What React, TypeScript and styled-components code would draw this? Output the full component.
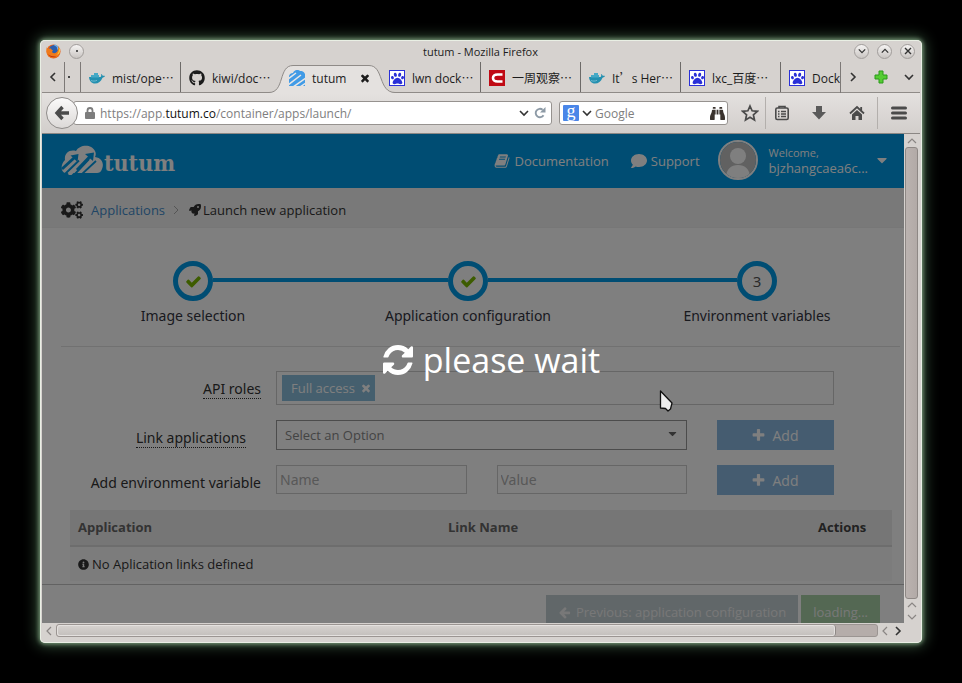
import React from "react";
import styled, { createGlobalStyle } from "styled-components";
import {
  FaBinoculars, FaCaretDown, FaCogs, FaComment, FaGithub, FaInfoCircle, FaPaw, FaRocket,
} from "react-icons/fa";

const Global = createGlobalStyle`
  * { box-sizing: border-box; }
  body { margin: 0; background: #000; }
  button, input, select { font: inherit; color: inherit; margin: 0; }
  button { border: 0; background: none; padding: 0; cursor: pointer; }
  svg { display: block; flex: none; }
`;

/* ---------- desktop and window frame ---------- */

const Desktop = styled.div`
  height: 100vh;
  min-height: 480px;
  padding: 40px;
  background: #000;
  display: flex;
`;

const Frame = styled.div`
  flex: 1;
  min-width: 0;
  display: flex;
  flex-direction: column;
  padding: 0 2px 2px;
  border-radius: 5px;
  background: #d6d2cf;
  box-shadow: inset 0 0 0 1px #e9efe4, 0 0 4px 1px #7c9c7c, 0 0 14px 3px #35503a;
  font-family: "Open Sans", "Noto Sans CJK SC", sans-serif;
  color: #1c1c1c;
`;

const TitleBar = styled.header`
  height: 22px;
  flex: none;
  padding: 0 5px 0 4px;
  display: grid;
  grid-template-columns: 1fr auto 1fr;
  align-items: center;
  font-size: 11px;
`;

const TitleGroup = styled.div<{ $end?: boolean }>`
  display: flex;
  align-items: center;
  gap: 8px;
  justify-content: ${(p) => (p.$end ? "flex-end" : "flex-start")};
`;

const RoundButton = styled.button`
  width: 15px;
  height: 15px;
  border-radius: 50%;
  border: 1px solid #a19d9b;
  background: linear-gradient(#f6f4f3, #c9c5c2);
  display: flex;
  align-items: center;
  justify-content: center;
`;

/* ---------- tab strip ---------- */

const TabStrip = styled.div`
  height: 31px;
  flex: none;
  display: flex;
  border-bottom: 1px solid #8f8b88;
  font-size: 12px;
`;

const StripButton = styled.button<{ $width: number; $line?: boolean }>`
  width: ${(p) => p.$width}px;
  flex: none;
  display: flex;
  align-items: center;
  justify-content: center;
  border-right: ${(p) => (p.$line ? "1px solid #7d7977" : "0")};
`;

const TabList = styled.div`
  flex: 1;
  min-width: 0;
  display: flex;
  margin-bottom: -1px;
  padding-bottom: 1px;
  overflow: hidden;
  border-right: 1px solid #7d7977;
`;

const TabItem = styled.div<{ $active?: boolean; $line?: boolean }>`
  position: relative;
  flex: 0 0 100px;
  display: flex;
  align-items: center;
  padding-left: 8px;
  border-right: 1px solid ${(p) => (p.$line ? "#6d6a68" : "transparent")};
  z-index: ${(p) => (p.$active ? 1 : 0)};
`;

const TabButton = styled.button`
  position: relative;
  display: flex;
  align-items: center;
  gap: 7px;
  padding-top: 2px;
  white-space: nowrap;
`;

const Wide = styled.span`
  font-family: "Noto Sans CJK SC", sans-serif;
  line-height: 1;
`;

const TabClose = styled.button`
  position: relative;
  margin: 2px 9px 0 auto;
`;

const TabShape = styled.svg`
  position: absolute;
  left: -12px;
  top: 3px;
`;

const Favicon = styled.span<{ $border?: string; $bg?: string; $fg?: string }>`
  width: 16px;
  height: 16px;
  flex: none;
  display: flex;
  align-items: center;
  justify-content: center;
  border: ${(p) => (p.$border ? `1px solid ${p.$border}` : "0")};
  background: ${(p) => p.$bg ?? "transparent"};
  color: ${(p) => p.$fg ?? "inherit"};
`;

/* ---------- navigation toolbar ---------- */

const NavBar = styled.nav`
  height: 41px;
  flex: none;
  display: flex;
  align-items: center;
  padding: 0 4px;
  background: linear-gradient(#e4e1df, #d2cecb);
  border-bottom: 1px solid #8b8784;
  font-size: 12px;
`;

const BackButton = styled.button`
  position: relative;
  width: 32px;
  height: 32px;
  flex: none;
  border-radius: 50%;
  border: 1px solid #8f8c8a;
  background: linear-gradient(#fbfafa, #dcd9d7);
  display: flex;
  align-items: center;
  justify-content: center;
`;

const Field = styled.div<{ $fixed?: boolean }>`
  flex: ${(p) => (p.$fixed ? "0 0 169px" : "1")};
  min-width: 0;
  height: 24px;
  display: flex;
  align-items: center;
  gap: ${(p) => (p.$fixed ? "3px" : "5px")};
  margin-left: ${(p) => (p.$fixed ? "7px" : "-5px")};
  padding: ${(p) => (p.$fixed ? "0 2px 0 3px" : "0 5px 0 11px")};
  background: #fff;
  border: 1px solid #96928f;
  border-radius: 3px;
  color: #7e7e7e;
`;

const Address = styled.div`
  flex: 1;
  min-width: 0;
  white-space: nowrap;
  overflow: hidden;
  strong { font-weight: 400; color: #111; }
`;

const SearchInput = styled.input`
  flex: 1;
  min-width: 0;
  border: 0;
  outline: 0;
  padding: 0;
  background: none;
  &::placeholder { color: #7e7e7e; opacity: 1; }
`;

const GoogleMark = styled.span`
  width: 16px;
  height: 16px;
  border-radius: 1px;
  background: #4a86e8;
  color: #fff;
  font: 18px/12px "Liberation Serif", serif;
  text-align: center;
`;

const Tool = styled.button<{ $width: number; $line?: boolean; $before?: number; $after?: number }>`
  width: ${(p) => p.$width}px;
  height: 32px;
  flex: none;
  display: flex;
  align-items: center;
  justify-content: center;
  padding: 0 ${(p) => p.$after ?? 0}px 0 ${(p) => p.$before ?? 0}px;
  border-right: ${(p) => (p.$line ? "1px solid #b3afac" : "0")};
`;

/* ---------- viewport and scroll bars ---------- */

const Body = styled.div`
  flex: 1;
  min-height: 0;
  display: flex;
`;

const Viewport = styled.main`
  position: relative;
  flex: 1;
  min-width: 0;
  overflow: hidden;
  background: #fff;
  font-family: "Open Sans", "Noto Sans", sans-serif;
  font-size: 13px;
  color: #333;
`;

const VBar = styled.div`
  width: 16px;
  flex: none;
  display: flex;
  flex-direction: column;
  align-items: center;
  padding-right: 1px;
`;

const VThumb = styled.div`
  flex: 1;
  width: 13px;
  border: 1px solid #8e8885;
  border-radius: 3px;
  background: linear-gradient(90deg, #bbb3b0, #b2aaa7);
`;

const HBar = styled.div`
  height: 18px;
  flex: none;
  display: flex;
  align-items: flex-start;
  padding: 1px 16px 0 0;
`;

const HTrack = styled.div`
  flex: 1;
  height: 13px;
  border: 1px solid #9b9592;
  border-radius: 3px;
  background: #b5adaa;
`;

const HThumb = styled.div`
  width: 95%;
  height: 11px;
  border-radius: 3px;
  border-right: 1px solid #8e8885;
  background: linear-gradient(#d6d2cf, #c3bfbc);
  box-shadow: inset 0 0 0 1px #e4e1df;
`;

const ScrollButton = styled.button<{ $w: number; $h: number }>`
  width: ${(p) => p.$w}px;
  height: ${(p) => p.$h}px;
  flex: none;
  display: flex;
  align-items: center;
  justify-content: center;
`;

/* ---------- web page ---------- */

const SiteHeader = styled.header`
  height: 54px;
  display: flex;
  align-items: center;
  padding: 0 14px 2px 19px;
  background: #009ae6;
  color: #fff;
`;

const Logo = styled.a`
  display: flex;
  align-items: center;
  margin-right: auto;
  color: #fff;
  text-decoration: none;
  font: 700 23px/30px "DejaVu Serif Condensed", "DejaVu Serif", serif;
  span { padding-top: 5px; }
`;

const HeaderLink = styled.a`
  display: flex;
  align-items: center;
  gap: 4px;
  margin-right: 22px;
  padding-top: 2px;
  color: #fff;
  text-decoration: none;
`;

const Account = styled.button`
  display: flex;
  align-items: center;
  gap: 11px;
  text-align: left;
  line-height: 16px;
  small { display: block; font-size: 11px; line-height: 15px; }
  > svg { margin-left: -5px; }
`;

const Avatar = styled.span`
  width: 40px;
  height: 40px;
  margin-left: -4px;
  border-radius: 50%;
  border: 2px solid #fff;
  overflow: hidden;
`;

const Crumbs = styled.nav`
  height: 40px;
  display: flex;
  align-items: center;
  gap: 8px;
  padding: 4px 19px 0;
  background: #f3f3f3;
  border-bottom: 1px solid #efefef;
  a { color: #428bca; text-decoration: none; margin-right: -2px; }
`;

const CrumbHere = styled.span`
  display: flex;
  align-items: center;
  gap: 2px;
`;

const Steps = styled.ol`
  margin: 0;
  padding: 33px 8px 0 26px;
  list-style: none;
  display: grid;
  grid-template-columns: 250fr 300fr 278fr;
  font-family: "Noto Sans", sans-serif;
  font-size: 14px;
  line-height: 20px;
  color: #33343e;
`;

const Step = styled.li`
  text-align: center;
`;

const StepTrack = styled.div`
  display: flex;
  align-items: center;
  margin-bottom: 5px;
`;

const StepLine = styled.span<{ $on?: boolean }>`
  flex: 1;
  height: 4px;
  margin-bottom: 2px;
  background: ${(p) => (p.$on ? "#009ae6" : "transparent")};
`;

const StepCircle = styled.span`
  width: 40px;
  height: 40px;
  border: 5px solid #009ae6;
  border-radius: 50%;
  display: flex;
  align-items: center;
  justify-content: center;
  font-size: 15px;
  color: #555;
`;

const Divider = styled.hr`
  margin: 20px 4px 0 19px;
  border: 0;
  border-top: 1px solid #e2e2e2;
`;

const Form = styled.form`
  padding: 24px 70px 0 0;
  display: grid;
  grid-template-columns: 219px minmax(0, 1fr) 117px;
  row-gap: 15px;
  column-gap: 15px;
  font-size: 14px;
`;

const LabelCell = styled.div<{ $inset?: boolean; $drop?: boolean }>`
  display: flex;
  justify-content: flex-end;
  align-items: center;
  padding-top: ${(p) => (p.$drop ? "6px" : "2px")};
  padding-right: ${(p) => (p.$inset ? "15px" : "0")};
`;

const Label = styled.label<{ $dotted?: boolean }>`
  font-family: "Noto Sans", sans-serif;
  line-height: 18px;
  border-bottom: ${(p) => (p.$dotted ? "1px dotted #333" : "1px solid transparent")};
`;

const RolesBox = styled.div`
  grid-column: 2 / 4;
  height: 34px;
  border: 1px solid #ccc;
  padding: 3px 5px;
`;

const RoleTag = styled.span`
  display: inline-flex;
  align-items: center;
  gap: 5px;
  height: 26px;
  padding: 0 3px 0 9px;
  background: #8bbedc;
  color: #fff;
  font-size: 13px;
`;

const Fields = styled.div`
  display: flex;
  gap: 30px;
  padding-right: 15px;
  height: 30px;
`;

const SelectBox = styled.div`
  flex: 1;
  display: grid;
  align-items: center;
  border: 1px solid #999;
  color: #666;
  > * { grid-area: 1 / 1; }
  svg { justify-self: end; margin: 0 7px 3px 0; pointer-events: none; }
`;

const Select = styled.select`
  width: 100%;
  height: 28px;
  padding: 0 8px;
  border: 0;
  appearance: none;
  background: none;
  font-size: 13px;
  color: #888;
`;

const TextInput = styled.input`
  flex: 1;
  min-width: 0;
  height: 29px;
  padding: 0 3px;
  border: 1px solid #ccc;
  background: none;
  font-family: "Noto Sans", sans-serif;
  font-size: 14px;
  &::placeholder { color: #b0b0b0; opacity: 1; }
`;

const AddButton = styled.button`
  height: 30px;
  display: flex;
  align-items: center;
  justify-content: center;
  gap: 7px;
  padding-right: 2px;
  background: #8bb8e0;
  color: #fff;
`;

const Links = styled.table`
  width: calc(100% - 40px);
  margin: 15px 12px 0 28px;
  border-collapse: collapse;
  table-layout: fixed;
  line-height: 18px;
  th { text-align: left; padding: 7px 8px 9px; height: 36px; background: #ededed; border-bottom: 2px solid #dadada; color: #666; }
  th:last-child { width: 82px; color: #444; }
  td { padding: 8px; height: 35px; background: #f9f9f9; }
`;

const Notice = styled.span`
  display: flex;
  align-items: center;
  gap: 3px;
`;

const Actions = styled.footer`
  margin-top: 3px;
  padding: 10px 24px 20px;
  border-top: 1px solid #c4c4c4;
  display: flex;
  justify-content: flex-end;
  gap: 3px;
`;

const ActionButton = styled.button<{ $bg: string }>`
  height: 34px;
  padding: 0 12px;
  display: flex;
  align-items: center;
  gap: 5px;
  background: ${(p) => p.$bg};
  color: #f0f0f0;
`;

const Overlay = styled.div`
  position: absolute;
  inset: 0;
  display: flex;
  align-items: center;
  justify-content: center;
  gap: 10px;
  padding: 0 0 38px 37px;
  background: rgba(0, 0, 0, 0.5);
  color: #fff;
  font-size: 34px;
`;

const Pointer = styled.svg`
  position: absolute;
  left: 617px;
  top: 255px;
`;

/* ---------- drawings ---------- */

type Dir = "left" | "right" | "up" | "down";
const turns: Record<Dir, number> = { right: 0, down: 90, left: 180, up: 270 };

const Chevron = ({ dir, size = 10, color = "#333", weight = 1.6 }: { dir: Dir; size?: number; color?: string; weight?: number }) => (
  <svg width={size} height={size} viewBox="0 0 10 10" fill="none" stroke={color} strokeWidth={weight}>
    <path d="M3 1l4 4-4 4" transform={`rotate(${turns[dir]} 5 5)`} />
  </svg>
);

const solidPaths = {
  check: "M1671 566q0 40-28 68l-724 724-136 136q-28 28-68 28t-68-28l-136-136-362-362q-28-28-28-68t28-68l136-136q28-28 68-28t68 28l294 295 656-657q28-28 68-28t68 28l136 136q28 28 28 68z",
  plus: "M1600 736v192q0 40-28 68t-68 28h-416v416q0 40-28 68t-68 28h-192q-40 0-68-28t-28-68v-416h-416q-40 0-68-28t-28-68v-192q0-40 28-68t68-28h416v-416q0-40 28-68t68-28h192q40 0 68 28t28 68v416h416q40 0 68 28t28 68z",
  times: "M1490 1322q0 40-28 68l-136 136q-28 28-68 28t-68-28l-294-294-294 294q-28 28-68 28t-68-28l-136-136q-28-28-28-68t28-68l294-294-294-294q-28-28-28-68t28-68l136-136q28-28 68-28t68 28l294 294 294-294q28-28 68-28t68 28l136 136q28 28 28 68t-28 68l-294 294 294 294q28 28 28 68z",
  arrow: "M1664 896v128q0 53-32.500 90.500t-84.500 37.500h-704l293 294q38 36 38 90t-38 90l-75 76q-37 37-90 37-52 0-91-37l-651-652q-37-37-37-90 0-52 37-91l651-650q38-38 91-38 52 0 90 38l75 74q38 38 38 91t-38 91l-293 293h704q52 0 84.500 37.500t32.500 90.500z",
  book: "M1703 478q40 57 18 129l-275 906q-19 64-76.500 107.500t-122.500 43.500h-923q-77 0-148.500-53.500t-99.500-131.500q-24-67-2-127 0-4 3-27t4-37q1-8-3-21.500t-3-19.500q2-11 8-21t16.500-23.500 16.500-23.500q23-38 45-91.500t30-91.500q3-10 .5-30t-.5-28q3-11 17-28t17-23q21-36 42-92t25-90q1-9-2.500-32t.5-28q4-13 22-30.500t22-22.500q19-26 42.500-84.500t27.500-96.500q1-8-3-25.500t-2-26.500q2-8 9-18t18-23 17-21q8-12 16.500-30.500t15-35 16-36 19.500-32 26.500-23.500 36-11.500 47.500 5.500l-1 3q38-9 51-9h761q74 0 114 56t18 130l-274 906q-36 119-71.500 153.500t-128.500 34.500h-869q-27 0-38 15-11 16-1 43 24 70 144 70h923q29 0 56-15.500t35-41.500l300-987q7-22 5-57 38 15 59 43zm-1064 2q-4 13 2 22.500t20 9.500h608q13 0 25.500-9.500t16.500-22.500l21-64q4-13-2-22.500t-20-9.500h-608q-13 0-25.500 9.500t-16.500 22.500zm-83 256q-4 13 2 22.500t20 9.500h608q13 0 25.500-9.500t16.500-22.500l21-64q4-13-2-22.500t-20-9.500h-608q-13 0-25.500 9.500t-16.500 22.500z",
};

const Solid = ({ name, size, color = "currentColor" }: { name: keyof typeof solidPaths; size: number; color?: string }) => (
  <svg width={size} height={size} viewBox="0 0 1792 1792" fill={color}><path d={solidPaths[name]} /></svg>
);

const FirefoxIcon = () => (
  <svg width="15" height="15" viewBox="0 0 16 16">
    <circle cx="8" cy="8" r="7.5" fill="#e8641b" />
    <circle cx="8.500" cy="6.500" r="5.500" fill="#2b5fae" />
    <path d="M9 1c3 1 4 3 3.500 5" stroke="#6fb2e8" strokeWidth="1.500" fill="none" />
    <path d="M1 3c0 2 .5 2 2 2 1.500-.5 3-.3 3 1 2 .5 1.500 1.500.5 2 0 2 3 2.500 5 .5 1-1 1.500-2.500 1.500-5 2.500 3 2.500 7-.5 9.500-4 3.500-10 2-11.500-2.500C.3 8 .3 5 1 3z" fill="#ef7a1a" />
    <path d="M13.500 4c1 3 0 6-2.500 7.500 2.500-.3 4-2 4-4.500 0-1.200-.5-2.200-1.500-3z" fill="#fbcf3a" />
    <path d="M2 11c2 3 6 4 9 2.500-3 0-6-.5-9-2.500z" fill="#b8260f" />
  </svg>
);

const WhaleIcon = () => (
  <svg width="16" height="14" viewBox="0 0 16 14">
    <path d="M0 6h11.500c.8-.6 1-1.800.4-3 1 .2 1.600 1 1.800 1.800 1-.3 1.800-.2 2.300.3-.5 1-1.500 1.400-2.500 1.600C12 10.500 9.500 12.500 6 12.500 2.500 12.500.4 10 0 6z" fill="#2490b0" />
    <path d="M2 4h8v2.500H2zM5 2h4v2H5z" fill="#45a9c6" />
    <path d="M2 9.500c2 .8 4 .8 6-.2" stroke="#8fcbdc" strokeWidth=".7" fill="none" />
  </svg>
);

const TutumIcon = () => (
  <svg width="16" height="16" viewBox="0 0 16 16">
    <path d="M4 3c1-3 5-4 7-2 2 0 4 .5 5 3v12H0V6c.5-2 2-3 4-3z" fill="#419be6" />
    <path d="M-1 9L7 3M-1 15L12 5M4 17L17 8M11 17l6-4" stroke="#e9e7e6" strokeWidth="1.500" />
  </svg>
);

const CMark = () => (
  <svg width="16" height="16" viewBox="0 0 16 16">
    <path d="M13.500 4.500H8.500C5.500 4.500 4 6 4 8s1.500 3.500 4.500 3.500h5" stroke="#fff" strokeWidth="2.600" fill="none" />
  </svg>
);

const LockIcon = () => (
  <svg width="10" height="12" viewBox="0 0 10 12">
    <path d="M2.500 6V3.500a2.500 2.500 0 0 1 5 0V6" stroke="#7d7d7d" strokeWidth="1.800" fill="none" />
    <rect y="5" width="10" height="7" rx="1" fill="#7d7d7d" />
  </svg>
);

const ReloadIcon = () => (
  <svg width="12" height="12" viewBox="0 0 12 12">
    <path d="M9.500 8.200A4.200 4.200 0 1 1 8.600 2.800" stroke="#8d9aa6" strokeWidth="1.900" fill="none" />
    <path d="M11.500 0v5.500H6z" fill="#8d9aa6" />
  </svg>
);

const BackArrow = () => (
  <svg width="16" height="16" viewBox="0 0 16 16" fill="none" stroke="#4b4b4b" strokeWidth="3.400">
    <path d="M8.500 2L3 8l5.500 6M3 8h12" />
  </svg>
);

const StarIcon = () => (
  <svg width="18" height="18" viewBox="0 0 18 18">
    <path d="M9 2l2.100 4.800 5.200.5-3.900 3.500 1.100 5.200L9 13.300 4.500 16l1.100-5.200L1.700 7.300l5.200-.5z" fill="none" stroke="#4b4b4b" strokeWidth="1.700" />
  </svg>
);

const ClipboardIcon = () => (
  <svg width="16" height="16" viewBox="0 0 16 16" fill="none" stroke="#4b4b4b" strokeWidth="1.600">
    <rect x="1.800" y="3" width="12.400" height="11.500" rx="1.500" />
    <path d="M5 3V1.500h6V3M4 6.500h1.500M7 6.500h5M4 9h1.500M7 9h5M4 11.500h1.500M7 11.500h5" />
  </svg>
);

const DownloadIcon = () => (
  <svg width="16" height="16" viewBox="0 0 16 16">
    <path d="M5 1h6v6h4l-7 7.500L1 7h4z" fill="#5a5a5a" />
  </svg>
);

const HomeIcon = () => (
  <svg width="16" height="16" viewBox="0 0 16 16">
    <path d="M1 8.500L8 2l7 6.500M12.200 2v4" stroke="#4b4b4b" strokeWidth="1.800" fill="none" />
    <path d="M8 5l5 4.500V15H9.500v-4h-3v4H3V9.500z" fill="#4b4b4b" />
  </svg>
);

const MenuIcon = () => (
  <svg width="16" height="14" viewBox="0 0 16 14" stroke="#4b4b4b" strokeWidth="3" strokeLinecap="round">
    <path d="M1.500 2h13M1.500 7h13M1.500 12h13" />
  </svg>
);

const GreenPlus = () => (
  <svg width="14" height="14" viewBox="0 0 14 14">
    <path d="M5 1h4v4h4v4H9v4H5V9H1V5h4z" fill="#55cc33" stroke="#2b9a1b" strokeLinejoin="round" />
  </svg>
);

const CloudLogo = () => (
  <svg width="43" height="30" viewBox="0 0 43 30">
    <path d="M4 28C0 27-1 20 4 15 3 9 8 4 15 6 18 0 30-2 34 6c1 2 1 4 0 6 8 1 9 8 7 12-1 3-3 4-5 4z" fill="#fff" />
    <path d="M1 24L13 13" stroke="#009ae6" strokeWidth="3" />
    <path d="M9.500 10.500l8-1.500-1 8z" fill="#009ae6" />
    <path d="M3 30L18 15.500M13 30L28 14" stroke="#009ae6" strokeWidth="2" />
    <path d="M8 30L27 11" stroke="#fff" strokeWidth="3.500" />
    <path d="M16 25L29 11.500" stroke="#009ae6" strokeWidth="3" />
    <path d="M24 9l9-1.500L32 16z" fill="#009ae6" />
    <path d="M20 30L35 16" stroke="#009ae6" strokeWidth="1.800" />
  </svg>
);

const RefreshIcon = () => (
  <svg width="30" height="30" viewBox="0 0 1536 1536" fill="currentColor">
    <path d="M1511 928q0 5-1 7-64 268-268 434.500t-478 166.500q-146 0-282.500-55t-243.500-157l-129 129q-19 19-45 19t-45-19-19-45v-448q0-26 19-45t45-19h448q26 0 45 19t19 45-19 45l-137 137q71 66 161 102t187 36q134 0 250-65t186-179q11-17 53-117 8-23 30-23h192q13 0 22.500 9.500t9.500 22.500zm25-800v448q0 26-19 45t-45 19h-448q-26 0-45-19t-19-45 19-45l138-138q-148-137-349-137-134 0-250 65t-186 179q-11 17-53 117-8 23-30 23h-199q-13 0-22.500-9.500t-9.500-22.500v-7q65-268 270-434.500t480-166.500q146 0 284 55.500t245 156.500l130-129q19-19 45-19t45 19 19 45z" />
  </svg>
);

const Person = () => (
  <svg width="36" height="36" viewBox="0 0 36 36">
    <rect width="36" height="36" fill="#c2c2c2" />
    <circle cx="18" cy="14" r="8" fill="#fff" />
    <path d="M6 36c0-9 5-13 12-13s12 4 12 13z" fill="#fff" />
  </svg>
);

/* ---------- data ---------- */

type Kind = "docker" | "github" | "tutum" | "baidu" | "c";
const tabs: { title: string; kind: Kind; line?: boolean }[] = [
  { title: "mist/ope⋯", kind: "docker", line: true },
  { title: "kiwi/doc⋯", kind: "github" },
  { title: "tutum", kind: "tutum" },
  { title: "lwn dock⋯", kind: "baidu", line: true },
  { title: "一周观察⋯", kind: "c", line: true },
  { title: "It’s Her⋯", kind: "docker", line: true },
  { title: "lxc_百度⋯", kind: "baidu", line: true },
  { title: "Docke", kind: "baidu" },
];

/* Full-width punctuation takes its glyphs from the CJK face. */
const TabTitle = ({ text }: { text: string }) => (
  <span>{text.split(/([⋯’])/).map((part, i) => (i % 2 ? <Wide key={i} lang="zh-CN">{part}</Wide> : part))}</span>
);

const TabIcon = ({ kind }: { kind: Kind }) => {
  if (kind === "baidu") return <Favicon $border="#2a30d8" $bg="#fff" $fg="#2a30d8"><FaPaw size={13} /></Favicon>;
  if (kind === "c") return <Favicon $bg="#c00a14"><CMark /></Favicon>;
  if (kind === "github") return <Favicon><FaGithub size={16} /></Favicon>;
  return <Favicon>{kind === "tutum" ? <TutumIcon /> : <WhaleIcon />}</Favicon>;
};

const steps = ["Image selection", "Application configuration", "Environment variables"];

export default function App() {
  return (
    <Desktop>
      <Global />
      <Frame>
        <TitleBar>
          <TitleGroup>
            <FirefoxIcon />
            <RoundButton aria-label="Window menu"><svg width="2" height="2"><rect width="2" height="2" fill="#555" /></svg></RoundButton>
          </TitleGroup>
          <span>tutum - Mozilla Firefox</span>
          <TitleGroup $end>
            <RoundButton aria-label="Minimize"><Chevron dir="down" size={8} /></RoundButton>
            <RoundButton aria-label="Maximize"><Chevron dir="up" size={8} /></RoundButton>
            <RoundButton aria-label="Close">
              <svg width="8" height="8" viewBox="0 0 8 8"><path d="M1 1l6 6M7 1L1 7" stroke="#333" strokeWidth="1.400" /></svg>
            </RoundButton>
          </TitleGroup>
        </TitleBar>

        <TabStrip>
          <StripButton $width={23} $line aria-label="Scroll tabs left"><Chevron dir="left" /></StripButton>
          <StripButton $width={16} $line aria-label="Previous tab">
            <svg width="10" height="2"><rect width="2" height="2" fill="#444" /></svg>
          </StripButton>
          <TabList role="tablist">
            {tabs.map((t, i) => {
              const active = t.kind === "tutum";
              return (
                <TabItem key={i} $active={active} $line={t.line}>
                  {active && (
                    <TabShape width="126" height="28" viewBox="0 0 126 28">
                      <path d="M0 27.500C16 27.500 9 .5 24 .5h76c15 0 9 27 26 27V28H0z" fill="#e4e1df" />
                      <path d="M0 27.500C16 27.500 9 .5 24 .5h76c15 0 9 27 26 27" fill="none" stroke="#8f8b88" />
                    </TabShape>
                  )}
                  <TabButton role="tab" aria-selected={active}>
                    <TabIcon kind={t.kind} />
                    <TabTitle text={t.title} />
                  </TabButton>
                  {active && <TabClose aria-label="Close tab"><Solid name="times" size={12} /></TabClose>}
                </TabItem>
              );
            })}
          </TabList>
          <StripButton $width={24} aria-label="Scroll tabs right"><Chevron dir="right" /></StripButton>
          <StripButton $width={32} aria-label="New tab"><GreenPlus /></StripButton>
          <StripButton $width={23} aria-label="List all tabs"><Chevron dir="down" /></StripButton>
        </TabStrip>

        <NavBar>
          <BackButton aria-label="Back"><BackArrow /></BackButton>
          <Field>
            <LockIcon />
            <Address role="textbox" aria-label="Address">https://app.<strong>tutum.co</strong>/container/apps/launch/</Address>
            <Chevron dir="down" />
            <ReloadIcon />
          </Field>
          <Field $fixed>
            <GoogleMark>g</GoogleMark>
            <Chevron dir="down" />
            <SearchInput aria-label="Search" placeholder="Google" />
            <FaBinoculars size={15} color="#3a332e" />
          </Field>
          <Tool $width={38} $before={6} $line aria-label="Bookmark"><StarIcon /></Tool>
          <Tool $width={31} aria-label="Bookmarks list"><ClipboardIcon /></Tool>
          <Tool $width={44} aria-label="Downloads"><DownloadIcon /></Tool>
          <Tool $width={37} $after={4} $line aria-label="Home"><HomeIcon /></Tool>
          <Tool $width={38} $before={4} aria-label="Menu"><MenuIcon /></Tool>
        </NavBar>

        <Body>
          <Viewport>
            <SiteHeader>
              <Logo href="#"><CloudLogo /><span>tutum</span></Logo>
              <HeaderLink href="#"><Solid name="book" size={16} />Documentation</HeaderLink>
              <HeaderLink href="#"><FaComment size={16} />Support</HeaderLink>
              <Account>
                <Avatar><Person /></Avatar>
                <span><small>Welcome,</small>bjzhangcaea6c...</span>
                <FaCaretDown size={16} />
              </Account>
            </SiteHeader>

            <Crumbs aria-label="Breadcrumb">
              <FaCogs size={22} />
              <a href="#">Applications</a>
              <Chevron dir="right" color="#aaa" weight={1} />
              <CrumbHere><FaRocket size={12} />Launch new application</CrumbHere>
            </Crumbs>

            <Steps>
              {steps.map((name, i) => (
                <Step key={name}>
                  <StepTrack>
                    <StepLine $on={i > 0} />
                    <StepCircle>{i < 2 ? <Solid name="check" size={17} color="#7ab800" /> : i + 1}</StepCircle>
                    <StepLine $on={i < 2} />
                  </StepTrack>
                  {name}
                </Step>
              ))}
            </Steps>

            <Divider />

            <Form>
              <LabelCell><Label $dotted id="roles">API roles</Label></LabelCell>
              <RolesBox role="group" aria-labelledby="roles">
                <RoleTag>Full access<button type="button" aria-label="Remove Full access"><Solid name="times" size={12} /></button></RoleTag>
              </RolesBox>

              <LabelCell $inset $drop><Label $dotted htmlFor="link">Link applications</Label></LabelCell>
              <Fields>
                <SelectBox>
                  <Select id="link"><option>Select an Option</option></Select>
                  <FaCaretDown size={13} />
                </SelectBox>
              </Fields>
              <AddButton type="button"><Solid name="plus" size={15} />Add</AddButton>

              <LabelCell $drop><Label htmlFor="env-name">Add environment variable</Label></LabelCell>
              <Fields>
                <TextInput id="env-name" placeholder="Name" />
                <TextInput aria-label="Value" placeholder="Value" />
              </Fields>
              <AddButton type="button"><Solid name="plus" size={15} />Add</AddButton>
            </Form>

            <Links>
              <thead>
                <tr><th>Application</th><th>Link Name</th><th>Actions</th></tr>
              </thead>
              <tbody>
                <tr><td colSpan={3}><Notice><FaInfoCircle size={11} />No Aplication links defined</Notice></td></tr>
              </tbody>
            </Links>

            <Actions>
              <ActionButton $bg="#c3ced2"><Solid name="arrow" size={13} />Previous: application configuration</ActionButton>
              <ActionButton $bg="#a8d0a6">loading...</ActionButton>
            </Actions>

            <Overlay role="status"><RefreshIcon />please wait</Overlay>
            <Pointer width="16" height="24" viewBox="0 0 16 24">
              <path d="M1.500 2v17l5 .5 2.500 2.500 2.500-2 1.500-6z" fill="#eee" stroke="#111" strokeWidth="1.300" strokeLinejoin="round" />
            </Pointer>
          </Viewport>
          <VBar>
            <ScrollButton $w={15} $h={13} aria-label="Scroll up"><Chevron dir="up" color="#8a8684" weight={1.200} /></ScrollButton>
            <VThumb />
            <ScrollButton $w={15} $h={12} aria-label="Scroll page up"><Chevron dir="up" color="#8a8684" weight={1.200} /></ScrollButton>
            <ScrollButton $w={15} $h={12} aria-label="Scroll down"><Chevron dir="down" color="#8a8684" weight={1.200} /></ScrollButton>
          </VBar>
        </Body>
        <HBar>
          <ScrollButton $w={14} $h={13} aria-label="Scroll left"><Chevron dir="left" color="#8a8684" weight={1.200} /></ScrollButton>
          <HTrack><HThumb /></HTrack>
          <ScrollButton $w={14} $h={13} aria-label="Scroll page left"><Chevron dir="left" color="#8a8684" weight={1.200} /></ScrollButton>
          <ScrollButton $w={12} $h={13} aria-label="Scroll right"><Chevron dir="right" /></ScrollButton>
        </HBar>
      </Frame>
    </Desktop>
  );
}
